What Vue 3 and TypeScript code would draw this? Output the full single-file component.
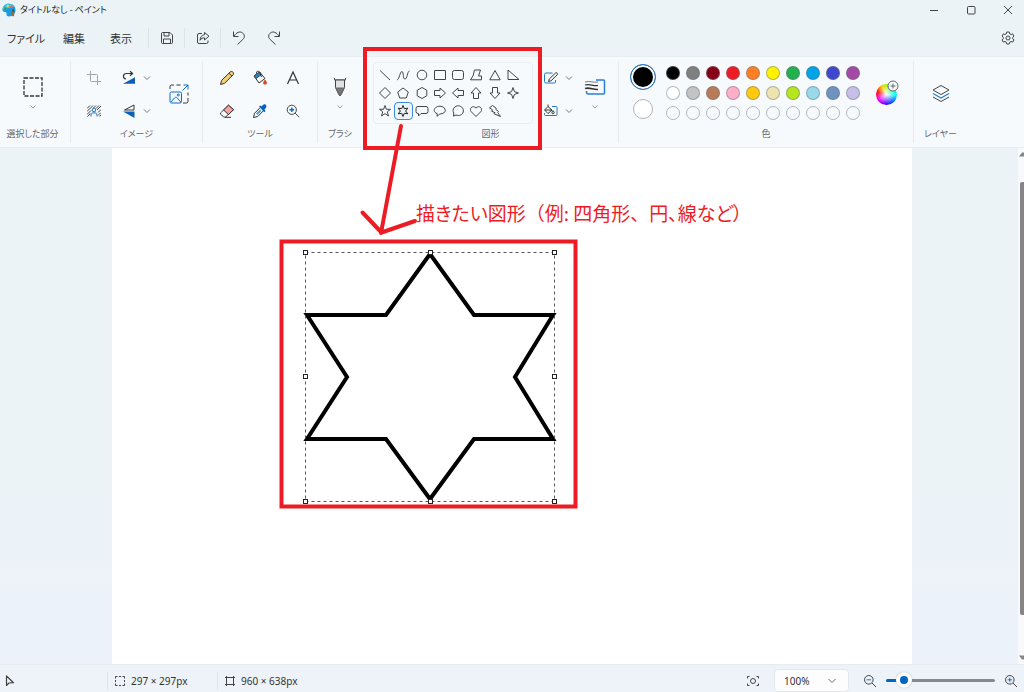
<script setup lang="ts">
import { ref } from 'vue'

interface Shape {
  name: string
  d: string
}

const shapes: Shape[] = [
  { name: '直線', d: 'M2 2.5 12 12' },
  { name: '曲線', d: 'M1 11.500C3 13 4 3 6 3.500s.500 7.500 3 7.500S11 3.500 13.500 3' },
  { name: '楕円', d: 'M7 2.200a4.800 4.800 0 1 0 0 9.600a4.800 4.800 0 1 0 0-9.600z' },
  { name: '四角形', d: 'M1.500 2.500h11v9h-11z' },
  { name: '角丸四角形', d: 'M3.500 2.500h7a2 2 0 0 1 2 2v5a2 2 0 0 1-2 2h-7a2 2 0 0 1-2-2v-5a2 2 0 0 1 2-2z' },
  { name: '多角形', d: 'M5.500 2H11.500L9.500 8H12.500V11.800H1.500L4 8z' },
  { name: '三角形', d: 'M7 2.500 12.200 11.800H1.800z' },
  { name: '直角三角形', d: 'M2 2v9.500h11z' },
  { name: 'ひし形', d: 'M7 1.500 12.500 7 7 12.500 1.500 7z' },
  { name: '五角形', d: 'M7 2 12.300 6 10.300 12H3.700L1.700 6z' },
  { name: '六角形', d: 'M7 1.500 11.800 4.200v5.600L7 12.500 2.200 9.800V4.200z' },
  { name: '右矢印', d: 'M1.500 4.500H7V2l5.500 5L7 12V9.500H1.500z' },
  { name: '左矢印', d: 'M12.500 4.500H7V2L1.500 7 7 12V9.500h5.500z' },
  { name: '上矢印', d: 'M4.500 12.500V7H2l5-5.500L12 7H9.500v5.500z' },
  { name: '下矢印', d: 'M4.500 1.500V7H2l5 5.500L12 7H9.500V1.500z' },
  { name: '4つ星', d: 'M7 1.500 8.400 5.600 12.500 7 8.400 8.400 7 12.500 5.600 8.400 1.500 7 5.600 5.600z' },
  { name: '5つ星', d: 'M7 1.500 8.400 5.300H12.500L9.300 7.900 10.500 12 7 9.600 3.500 12 4.700 7.900 1.500 5.300H5.600z' },
  { name: '6つ星', d: 'M7 1.500 8.300 4.700 11.800 4.200 9.600 7 11.800 9.800 8.300 9.300 7 12.500 5.700 9.300 2.200 9.800 4.400 7 2.200 4.200 5.700 4.700z' },
  { name: '角丸吹き出し', d: 'M3 2.500h8a2 2 0 0 1 2 2v3a2 2 0 0 1-2 2H6L3.500 12V9.500H3a2 2 0 0 1-2-2v-3a2 2 0 0 1 2-2z' },
  { name: '円形吹き出し', d: 'M4 12.300 4.300 9.700C-1 8 1 2.200 7 2.200s8 7.600-.2 7.800z' },
  { name: '雲形吹き出し', d: 'M2.500 12.200 2.800 9C.5 5.500 4 1.500 7.500 1.800S13 5 12.200 8 8 12.300 5 11z' },
  { name: 'ハート', d: 'M7 12.500 2.200 7.700C-.2 4.800 3.500 .5 7 4 10.500.5 14.200 4.800 11.800 7.700z' },
  { name: '稲妻', d: 'M4.500 1.500 8.300 4.300 7.600 5.200 10.500 7.500 9.700 8.500 12.500 12.500 6 9.700 7 8.700 3.500 7.200 4.600 6 1.500 3.800z' },
]

const selectedShape = ref('6つ星')

const palette: string[][] = [
  ['#000000', '#7f7f7f', '#880015', '#ed1c24', '#ff7f27', '#fff200', '#22b14c', '#00a2e8', '#3f48cc', '#a349a4'],
  ['#ffffff', '#c3c3c3', '#b97a57', '#ffaec9', '#ffc90e', '#efe4b0', '#b5e61d', '#99d9ea', '#7092be', '#c8bfe7'],
  Array.from({ length: 10 }, () => 'transparent'),
]

const handles: [number, number][] = [
  [3, 3], [128, 3], [252, 3],
  [3, 127], [252, 127],
  [3, 252], [128, 252], [252, 252],
]

const zoom = ref('100%')
const zoomPos = ref(11)
</script>

<template>
  <div class="app">
    <header class="titlebar">
      <svg class="logo" width="14" height="14" viewBox="0 0 14 14">
        <path d="M7 .8C3 .8.5 3.500.5 7c0 1.500 1.500 2 2.800 2 1.200 0 1.400 1 1.200 2-.3 1.500.8 2.400 2.500 2.400 4 0 6.500-3 6.500-6.400S11 .8 7 .8z" fill="#1a9be0" />
        <path d="M7 .8C3 .8.5 3.500.5 7l6-2 6-1.500C11.300 1.800 9.400.8 7 .8z" fill="#3cc0f2" />
        <circle cx="3.300" cy="5.500" r="1.300" fill="#2fa35a" />
        <circle cx="5.800" cy="3" r="1.200" fill="#f7d34a" />
        <circle cx="9.400" cy="3.600" r="1.200" fill="#f0703a" />
        <path d="M10 8.500h2.300l-.3 4.800h-1.700z" fill="#a65f2b" />
        <path d="M9.800 8.500 11 5.500l1.600 3z" fill="#4a4a52" />
      </svg>
      <h1>タイトルなし - ペイント</h1>
      <div class="window-buttons">
        <button type="button" aria-label="最小化"><svg width="12" height="12" viewBox="0 0 12 12"><path d="M2 6.500h8" /></svg></button>
        <button type="button" aria-label="最大化"><svg width="12" height="12" viewBox="0 0 12 12"><rect x="2.500" y="2.500" width="7.500" height="7.500" rx="1" /></svg></button>
        <button type="button" aria-label="閉じる"><svg width="12" height="12" viewBox="0 0 12 12"><path d="M2 2l8 8M10 2l-8 8" /></svg></button>
      </div>
    </header>

    <div class="menubar">
      <nav class="menus">
        <button type="button">ファイル</button>
        <button type="button">編集</button>
        <button type="button">表示</button>
      </nav>
      <button type="button" class="quick ruled" aria-label="保存">
        <svg width="14" height="14" viewBox="0 0 14 14"><path d="M1.500 2.500a1 1 0 0 1 1-1h7.500l2.500 2.500v7.500a1 1 0 0 1-1 1h-9a1 1 0 0 1-1-1zM4 1.500V5h5V1.500M3.500 12.500V8h7v4.500" /></svg>
      </button>
      <button type="button" class="quick ruled" aria-label="共有">
        <svg width="14" height="14" viewBox="0 0 14 14"><path d="M6 2.500H3a1.500 1.500 0 0 0-1.500 1.500v7A1.500 1.500 0 0 0 3 12.500h7.500A1.500 1.500 0 0 0 12 11V9.500M8.500 1.500 13 5.200 8.500 9V6.800C6.500 6.800 5.300 7.500 4 9.300 4.300 5.800 6 4 8.500 3.700z" /></svg>
      </button>
      <button type="button" class="quick ruled" aria-label="元に戻す">
        <svg width="14" height="16" viewBox="0 0 14 16"><path d="M1.500 1.500v5h5M2 6C4.500 2.500 7.500 1 10.300 2.700c2.700 1.800 2.500 4.800.7 6.600L5.500 14.500" /></svg>
      </button>
      <button type="button" class="quick" aria-label="やり直し">
        <svg width="14" height="16" viewBox="0 0 14 16"><path d="M12.500 1.500v5h-5M12 6C9.500 2.500 6.500 1 3.700 2.700 1 4.500 1.200 7.500 3 9.300l5.500 5.200" /></svg>
      </button>
      <button type="button" class="settings" aria-label="設定">
        <svg width="14" height="14" viewBox="0 0 14 14"><path d="M5.700 1h2.600l.4 1.800 1.300.7 1.700-.6 1.300 2.200L11.700 6.300v1.400L13 8.900l-1.300 2.200-1.700-.6-1.300.7L8.300 13H5.700l-.4-1.800-1.300-.7-1.700.6L1 8.900l1.300-1.200V6.300L1 5.100l1.300-2.200 1.700.6 1.300-.7z" stroke-linejoin="round" /><circle cx="7" cy="7" r="2" /></svg>
      </button>
    </div>

    <div class="ribbon">
      <section class="group select-group">
        <div class="stack">
          <button type="button" class="large" aria-label="選択">
            <svg width="20" height="20" viewBox="0 0 20 20"><rect x="1" y="1" width="18" height="18" stroke="#333" stroke-dasharray="4 1.500" stroke-width="1.300" /></svg>
          </button>
          <button type="button" class="drop" aria-label="選択の種類"><svg width="8" height="6" viewBox="0 0 8 6"><path d="M1.500 1.500 4 4l2.500-2.500" /></svg></button>
        </div>
        <h2>選択した部分</h2>
      </section>

      <section class="group">
        <div class="image-tools">
          <button type="button" aria-label="トリミング">
            <svg width="14" height="14" viewBox="0 0 14 14"><path d="M0 3.500h9.500a1 1 0 0 1 1 1V14M3.500 0v9.500a1 1 0 0 0 1 1H14" stroke="#a3a7ab" /></svg>
          </button>
          <div class="split">
            <button type="button" aria-label="回転">
              <svg width="14" height="14" viewBox="0 0 14 14"><path d="M13 6.300v6.500H1z" fill="#0a5fb8" stroke="none" /><path d="M4 8C.5 7.500.6 2.500 4.500 2.500h6M8 .2 10.600 2.500 8 4.800" stroke="#333" stroke-width="1.200" /></svg>
            </button>
            <button type="button" class="drop" aria-label="回転の種類"><svg width="8" height="6" viewBox="0 0 8 6"><path d="M1 1.500 4 4.500l3-3" /></svg></button>
          </div>
          <button type="button" class="resize" aria-label="サイズ変更">
            <svg width="22" height="22" viewBox="0 0 22 22"><path d="M2 6V3.500A1.500 1.500 0 0 1 3.500 2H6M8.500 2h4M20 9.500v3M20 15v3.500a1.500 1.500 0 0 1-1.500 1.500H15" stroke="#333" /><rect x="2" y="9" width="11.500" height="11" rx="1.500" stroke="#0a6cc7" /><path d="M3 19l3.500-4c1-1 1.800-1 2.800 0l3.500 4M14.500 7.500 20 2M15.500 2H20v4.500" stroke="#0a6cc7" /><circle cx="10.300" cy="12" r="1" stroke="#0a6cc7" /></svg>
          </button>
          <button type="button" aria-label="背景の削除">
            <svg width="14" height="12" viewBox="0 0 14 12"><path d="M0 3.500 3 .5M0 6.500l6-6M0 9.500l4-4M.5 11.500l3-3M6.500 3 9 .5M9 3.500l3-3M10 5l4-4M11 7.500l3-3M11 10.500l3-3M12.500 11.500l1.500-1.500" stroke="#3a3a3a" /><circle cx="7" cy="5" r="1.800" stroke="#1873cc" /><path d="M4 11.500V10c0-1.500 1-2.200 3-2.200s3 .7 3 2.200v1.500" stroke="#1873cc" /></svg>
          </button>
          <div class="split">
            <button type="button" aria-label="反転">
              <svg width="14" height="14" viewBox="0 0 14 14"><path d="M12 1v5H2.500z" stroke="#333" /><path d="M12.500 7.500V14L1 7.500z" fill="#0a5fb8" stroke="none" /></svg>
            </button>
            <button type="button" class="drop" aria-label="反転の種類"><svg width="8" height="6" viewBox="0 0 8 6"><path d="M1 1.500 4 4.500l3-3" /></svg></button>
          </div>
        </div>
        <h2>イメージ</h2>
      </section>

      <section class="group">
        <div class="tools">
          <button type="button" aria-label="鉛筆">
            <svg width="16" height="16" viewBox="0 0 16 16"><path d="M1.500 14.500 2.600 10.500 11.300 1.800c1.800-1.300 4.200 1 2.900 2.900L5.500 13.400z" fill="#f3cf72" stroke="#333" /><path d="M10 3.200 12.800 6" stroke="#333" /></svg>
          </button>
          <button type="button" aria-label="塗りつぶし">
            <svg width="16" height="16" viewBox="0 0 16 16"><path d="M2 6 7.500 2 13 8.500 7 13z" fill="#f4f7fa" stroke="#333" /><path d="M2 6 7.500 2 9.500 4.500 4 8.500z" fill="#1b86d8" /><path d="M4.500 3.500C4 .5 7 .5 8 3l1.500 4" stroke="#333" /><path d="M13 9.500c3 3.500 2 5 0 5s-3-1.500 0-5z" fill="#d9481c" stroke="none" /></svg>
          </button>
          <button type="button" aria-label="テキスト">
            <svg width="16" height="16" viewBox="0 0 16 16"><path d="M2.500 14 8 2l5.500 12M4.300 10h7.400" stroke="#333" stroke-width="1.200" /></svg>
          </button>
          <button type="button" aria-label="消しゴム">
            <svg width="16" height="16" viewBox="0 0 16 16"><path d="M1.500 10 9.500 2.200l5 4.500L6.500 14H4.800L1.500 11.200z" fill="#fff" stroke="#333" /><path d="M4.500 7 9.500 2.200l5 4.500-5 4.800z" fill="#f4a3a3" stroke="#333" /><path d="M6 14.300h6" stroke="#333" /></svg>
          </button>
          <button type="button" aria-label="色の選択">
            <svg width="16" height="16" viewBox="0 0 16 16"><path d="M8 4.800 2.500 10.300 1.500 14.500l4.200-1L11.200 8" stroke="#333" /><path d="M7 3.500 8.200 2.500 9.500 3.500 11 2c2-2 4.500.7 3 2.700L12.500 6.500l1 1.500-1.200 1.200z" fill="#0a5fb8" stroke="none" /><path d="M4 10.500 8 6.500l1.500 1.500-4 4z" fill="#4ba0e0" stroke="none" /></svg>
          </button>
          <button type="button" aria-label="拡大鏡">
            <svg width="16" height="16" viewBox="0 0 16 16"><circle cx="6.800" cy="6.800" r="4.600" stroke="#444" /><path d="M10.200 10.200l4 4" stroke="#444" /><path d="M4.500 6.800h4.600M6.800 4.500v4.600" stroke="#0a6cc7" stroke-width="1.400" /></svg>
          </button>
        </div>
        <h2>ツール</h2>
      </section>

      <section class="group plain">
        <div class="stack">
          <button type="button" class="large" aria-label="ブラシ">
            <svg width="14" height="20" viewBox="0 0 14 20"><path d="M1.500 1v2h11V1" stroke="#444" /><path d="M2.500 3v7.500L5.500 17 7 19l1.500-2 3-6.500V3z" stroke="#444" fill="#dfe2e5" /><path d="M3 11h8L8 16.700l-1 1.800-1-1.800z" fill="#777" stroke="#666" /></svg>
          </button>
          <button type="button" class="drop" aria-label="ブラシの種類"><svg width="8" height="6" viewBox="0 0 8 6"><path d="M1.500 1.500 4 4l2.500-2.500" /></svg></button>
        </div>
        <h2>ブラシ</h2>
      </section>

      <section class="group">
        <div class="shape-tools">
          <div class="gallery">
            <button
              v-for="shape in shapes"
              :key="shape.name"
              type="button"
              :class="{ selected: shape.name === selectedShape }"
              :aria-label="shape.name"
              @click="selectedShape = shape.name"
            >
              <svg width="14" height="14" viewBox="0 0 14 14"><path :d="shape.d" /></svg>
            </button>
          </div>
          <div class="rows">
            <div class="split">
              <button type="button" aria-label="図形の輪郭">
                <svg width="16" height="14" viewBox="0 0 16 14"><path d="M9.500 2H3a1.500 1.500 0 0 0-1.500 1.500v7A1.500 1.500 0 0 0 3 12h8.500a1 1 0 0 0 1-1V9" stroke="#2279cc" /><path d="M5.500 10.500 6.300 8 12.500 2c1.200-.8 2.500.5 1.800 1.700L8 9.800z" fill="#f7fafd" stroke="#333" /></svg>
              </button>
              <button type="button" class="drop" aria-label="輪郭の種類"><svg width="8" height="6" viewBox="0 0 8 6"><path d="M1 1.500 4 4.500l3-3" /></svg></button>
            </div>
            <div class="split">
              <button type="button" aria-label="図形の塗りつぶし">
                <svg width="16" height="14" viewBox="0 0 16 14"><path d="M9 2.500h4a1 1 0 0 1 1 1v7a1 1 0 0 1-1 1H2.500a1 1 0 0 1-1-1V9" stroke="#2279cc" /><path d="M5 2.500 1.500 6 5 9.500 9 6zM5 2.500V.5M2 6h6.500" fill="#f7fafd" stroke="#333" /><path d="M10 6.500c1.700 2 1.300 3.300 0 3.300s-1.700-1.300 0-3.300z" stroke="#333" /></svg>
              </button>
              <button type="button" class="drop" aria-label="塗りつぶしの種類"><svg width="8" height="6" viewBox="0 0 8 6"><path d="M1 1.500 4 4.500l3-3" /></svg></button>
            </div>
          </div>
          <div class="stack">
            <button type="button" class="large" aria-label="線の太さ">
              <svg width="22" height="18" viewBox="0 0 22 18"><path d="M12 2h7.500a1 1 0 0 1 1 1v12a1 1 0 0 1-1 1H4.500a2 2 0 0 1-2-2v-1" stroke="#2a80d0" stroke-width="1.500" /><path d="M1 4c5-1.500 8 1 13 0" stroke="#555" stroke-width=".8" /><path d="M1 7c5-1.500 8 1.500 13 .5" stroke="#333" stroke-width="1.200" /><path d="M1 10.500c5-1.500 8 1.500 13 1" stroke="#333" stroke-width="1.600" /></svg>
            </button>
            <button type="button" class="drop" aria-label="太さの選択"><svg width="8" height="6" viewBox="0 0 8 6"><path d="M1.500 1.500 4 4l2.500-2.500" /></svg></button>
          </div>
        </div>
        <h2>図形</h2>
      </section>

      <section class="group">
        <div class="colours">
          <div class="current">
            <button type="button" class="primary" aria-label="色 1"></button>
            <button type="button" class="secondary" aria-label="色 2"></button>
          </div>
          <div class="palette">
            <template v-for="(row, r) in palette" :key="r">
              <button
                v-for="(colour, c) in row"
                :key="c"
                type="button"
                :aria-label="`パレット ${r + 1}-${c + 1}`"
                :style="{ backgroundColor: colour }"
              ></button>
            </template>
          </div>
          <button type="button" class="wheel" aria-label="色の編集">
            <span class="disc"></span>
            <svg width="12" height="12" viewBox="0 0 12 12"><circle cx="6" cy="6" r="5" fill="#f7fafd" stroke="#666" /><path d="M3.500 6h5M6 3.500v5" stroke="#666" /></svg>
          </button>
        </div>
        <h2>色</h2>
      </section>

      <section class="group plain">
        <div class="layers">
          <button type="button" aria-label="レイヤー">
            <svg width="18" height="20" viewBox="0 0 18 20"><path d="M9 1.500 17 6 9 10.500 1 6z" stroke="#444" stroke-linejoin="round" /><path d="M1 9.500 9 14l8-4.500" stroke="#2a80d0" stroke-width="1.300" /><path d="M1 13 9 17.500 17 13" stroke="#444" /></svg>
          </button>
        </div>
        <h2>レイヤー</h2>
      </section>
    </div>

    <main class="workspace">
      <div class="paper">
        <svg class="drawing" width="256" height="256" viewBox="0 0 256 256">
          <path d="M128 5 172 66H251L213 128 251 190H172L128 250 84 190H5L45 128 5 66H84z" fill="none" stroke="#000" stroke-width="4" />
          <rect x="3.500" y="3.500" width="249" height="249" fill="none" stroke="#555" stroke-dasharray="3 3" />
          <rect v-for="([x, y], i) in handles" :key="i" :x="x - 1.500" :y="y - 1.500" width="4" height="4" fill="#fff" stroke="#222" />
        </svg>
      </div>
      <div class="scrollbar">
        <svg width="6" height="6" viewBox="0 0 6 6"><path d="M1 5.500 4 1.500h2v4z" /></svg>
        <span class="thumb"></span>
        <svg width="6" height="6" viewBox="0 0 6 6"><path d="M1 .5 4 4.500h2v-4z" /></svg>
      </div>
    </main>

    <footer class="statusbar">
      <div class="cell pointer">
        <svg width="10" height="12" viewBox="0 0 10 12"><path d="M1.500 1v9.500L4 8l4.500-.3z" stroke-linejoin="round" stroke-width="1.200" /></svg>
      </div>
      <div class="cell ruled">
        <svg width="12" height="12" viewBox="0 0 12 12"><path d="M1.500 3.500v-2h2M5 1.500h2M8.500 1.500h2v2M10.500 5v2M10.500 8.500v2h-2M7 10.500H5M3.500 10.500h-2v-2M1.500 7V5" /></svg>
        <span>297 × 297px</span>
      </div>
      <div class="cell ruled">
        <svg width="12" height="12" viewBox="0 0 12 12"><path d="M2.500 1v10M9.500 1v10M1 2.500h10M1 9.500h10" /></svg>
        <span>960 × 638px</span>
      </div>
      <div class="zoom">
        <button type="button" class="fit" aria-label="ウィンドウに合わせる">
          <svg width="14" height="12" viewBox="0 0 14 12"><path d="M1.500 3.500v-2h2M10.500 1.500h2v2M12.500 8.500v2h-2M3.500 10.500h-2v-2" /><circle cx="7" cy="6" r="2.500" /></svg>
        </button>
        <div class="level">
          <select v-model="zoom" aria-label="ズーム倍率">
            <option>50%</option>
            <option>100%</option>
            <option>200%</option>
          </select>
          <svg width="10" height="6" viewBox="0 0 10 6"><path d="M1.500 1 5 4.500 8.500 1" /></svg>
        </div>
        <button type="button" class="step" aria-label="縮小">
          <svg width="14" height="14" viewBox="0 0 14 14"><circle cx="5.800" cy="5.800" r="4.300" /><path d="M9 9l4 4" /><path d="M3.500 5.800h4.600" stroke="#1873cc" /></svg>
        </button>
        <input v-model="zoomPos" type="range" min="0" max="100" aria-label="ズーム" />
        <button type="button" class="step" aria-label="拡大">
          <svg width="14" height="14" viewBox="0 0 14 14"><circle cx="5.800" cy="5.800" r="4.300" /><path d="M9 9l4 4" /><path d="M3.500 5.800h4.600M5.800 3.500v4.600" stroke="#1873cc" /></svg>
        </button>
      </div>
    </footer>

    <svg class="notes" width="760" height="520" viewBox="0 0 760 520">
      <rect x="365" y="49" width="175" height="99" stroke-width="4" />
      <rect x="281.500" y="241.500" width="294" height="265" stroke-width="4" />
      <path d="M401 126 381 233M362.500 212.500 381.500 232.500 415 221" stroke-width="4" stroke-linecap="round" stroke-linejoin="round" />
      <text x="416" y="221">描きたい図形<tspan class="wide">（</tspan>例: 四角形<tspan class="wide">、</tspan>円、線など）</text>
    </svg>
  </div>
</template>

<style>
body {
  margin: 0;
}
</style>

<style scoped>
.app {
  position: relative;
  display: grid;
  grid-template-rows: auto auto auto 1fr auto;
  height: 100vh;
  overflow: hidden;
  background: #ebf3f7;
  color: #333;
  font-family: "Noto Sans", "Noto Sans CJK JP", sans-serif;
  font-size: 10px;
}

button {
  display: flex;
  align-items: center;
  justify-content: center;
  padding: 0;
  border: 0;
  background: none;
  color: inherit;
  font: inherit;
}

svg {
  display: block;
  flex: none;
  fill: none;
  stroke: #444;
}

h1,
h2 {
  margin: 0;
  font-weight: 400;
}

.titlebar {
  display: flex;
  align-items: center;
  height: 19px;
  padding-left: 2px;
}

.logo {
  stroke: none;
}

h1 {
  margin-left: 4px;
  color: #222;
  font-family: "Noto Sans CJK JP", sans-serif;
  font-size: 9px;
  font-feature-settings: "palt";
}

.window-buttons {
  display: flex;
  gap: 5px;
  margin-left: auto;
}

.window-buttons button {
  width: 32px;
  height: 19px;
}

.menubar {
  display: flex;
  align-items: center;
  height: 38px;
  box-sizing: border-box;
  border-bottom: 1px solid #e9eef0;
}

.menus {
  display: grid;
  grid-template-columns: 56px 47px 38px;
  padding-left: 7px;
  font-family: "Noto Sans CJK JP", sans-serif;
  font-size: 11px;
  font-feature-settings: "palt";
}

.menus button {
  justify-content: start;
}

.quick {
  width: 36px;
  height: 20px;
}

.ruled {
  border-left: 1px solid #dde4e8;
}

.settings {
  width: 32px;
  height: 20px;
  margin-left: auto;
}

.ribbon {
  display: grid;
  grid-template-columns: 71px 132px 115px 45px 256px 295px 54px;
  padding-top: 4px;
  border-bottom: 1px solid #e9edef;
  background: #f7fafd;
}

.group {
  display: grid;
  grid-template-rows: 66px 14px;
  padding-bottom: 2px;
  margin-bottom: 4px;
  border-right: 1px solid #e6eaed;
}

.select-group {
  padding-right: 5px;
}

.plain {
  border-right-color: transparent;
}

h2 {
  color: #666;
  font-family: "Noto Sans CJK JP", sans-serif;
  font-size: 9px;
  line-height: 14px;
  text-align: center;
  white-space: nowrap;
  font-feature-settings: "palt";
}

.drop svg {
  stroke: #777;
}

.stack {
  display: flex;
  flex-direction: column;
  align-items: center;
  gap: 4px;
  padding-top: 14px;
}

.large {
  width: 28px;
  height: 24px;
}

.stack .drop {
  width: 28px;
  height: 8px;
}

.stack .drop svg {
  stroke: #999;
}

.split {
  display: grid;
  grid-template-columns: 16px 20px;
}

.image-tools {
  display: grid;
  grid-template-columns: 46px 36px 1fr;
  grid-template-rows: 33px 33px;
  column-gap: 4px;
  padding-right: 5px;
}

.resize {
  grid-row: 1 / 3;
  grid-column: 3;
}

.tools {
  display: grid;
  grid-template-columns: repeat(3, 33px);
  grid-template-rows: 33px 33px;
  justify-content: center;
}

.shape-tools {
  display: flex;
  align-items: start;
  padding-left: 10px;
}

.gallery {
  display: grid;
  grid-template-columns: repeat(8, 1fr);
  grid-template-rows: repeat(3, 18px);
  width: 160px;
  height: 62px;
  margin: 1px 10px 0 0;
  padding: 3px 10px 3px 2px;
  box-sizing: border-box;
  border: 1px solid #eceff2;
  border-radius: 4px;
}

.gallery .selected {
  border: 1px solid #3d8bd4;
  border-radius: 4px;
  background: #eef3f8;
}

.gallery .selected svg {
  stroke: #222;
}

.rows {
  display: grid;
  grid-template-rows: 33px 33px;
}

.shape-tools .stack {
  margin-left: 2px;
}

.colours {
  display: flex;
  align-items: start;
  padding-left: 11px;
}

.current {
  display: grid;
  justify-items: center;
  gap: 9px;
  margin: 3px 7px 0 0;
}

.primary {
  width: 26px;
  height: 26px;
  border: 1px solid #2a80d0;
  border-radius: 50%;
  background: #000;
  box-shadow: inset 0 0 0 2px #f7fafd;
}

.secondary {
  width: 20px;
  height: 20px;
  border: 1px solid #b0b3b6;
  border-radius: 50%;
  background: #fff;
}

.palette {
  display: grid;
  grid-template-columns: repeat(10, 20px);
  grid-template-rows: repeat(3, 20px);
  place-items: center;
  padding-top: 2px;
}

.palette button {
  width: 14px;
  height: 14px;
  border: 1px solid rgba(110, 120, 130, 0.5);
  border-radius: 50%;
}

.wheel {
  position: relative;
  width: 26px;
  height: 66px;
  margin-left: 10px;
}

.disc {
  width: 21px;
  height: 21px;
  border-radius: 50%;
  background:
    radial-gradient(circle, #fff 0, rgba(255, 255, 255, 0) 65%),
    conic-gradient(#9f0, #0f6 45deg, #0ff 90deg, #06f 135deg, #40f 180deg, #f0f 240deg, #f00 285deg, #fc0 330deg, #9f0);
}

.wheel svg {
  position: absolute;
  top: 19px;
  right: 0;
}

.layers {
  display: grid;
}

.workspace {
  position: relative;
  display: flex;
  justify-content: center;
  min-height: 0;
  background: linear-gradient(#ebf3f7 65%, #edf2fa);
}

.paper {
  position: relative;
  width: 800px;
  background: #fff;
}

.drawing {
  position: absolute;
  top: 101px;
  left: 190px;
}

.scrollbar {
  position: absolute;
  top: 0;
  right: 0;
  bottom: 0;
  display: flex;
  flex-direction: column;
  align-items: end;
  box-sizing: border-box;
  width: 6px;
  padding: 3px 0;
  background: #f7f9fc;
}

.scrollbar svg {
  fill: #858585;
  stroke: none;
}

.thumb {
  flex: 1;
  width: 4px;
  margin: 25px 0 40px;
  border-radius: 2px 0 0 2px;
  background: #858585;
}

.statusbar {
  display: flex;
  align-items: center;
  height: 28px;
  padding-top: 4px;
  box-sizing: border-box;
  border-top: 1px solid #e6ebef;
  background: #eef3f9;
}

.cell {
  display: flex;
  align-items: center;
  gap: 5px;
  width: 103px;
  height: 18px;
  padding-left: 6px;
  white-space: nowrap;
}

.pointer {
  width: 102px;
  padding-left: 5px;
}

.zoom {
  display: flex;
  align-items: center;
  margin-left: auto;
}

.fit {
  width: 20px;
  height: 20px;
  margin-right: 11px;
}

.level {
  position: relative;
  width: 75px;
}

.level select {
  width: 100%;
  height: 23px;
  padding: 0 20px 0 9px;
  appearance: none;
  border: 1px solid #e4e8ec;
  border-radius: 4px;
  background: #fdfdfe;
  color: #333;
  font: inherit;
}

.level svg {
  position: absolute;
  top: 9px;
  right: 12px;
  stroke: #666;
}

.step {
  width: 26px;
  height: 20px;
}

.level + .step {
  margin-left: 8px;
}

input[type="range"] {
  width: 109px;
  height: 16px;
  margin: 0 3px;
  appearance: none;
  background: none;
}

input[type="range"]::-webkit-slider-runnable-track {
  height: 3px;
  border-radius: 2px;
  background: linear-gradient(90deg, #0067c0 16%, #868a8e 16%);
}

input[type="range"]::-webkit-slider-thumb {
  width: 16px;
  height: 16px;
  margin-top: -7px;
  appearance: none;
  border: 4px solid #fff;
  border-radius: 50%;
  background: #0067c0;
  box-shadow: 0 0 1px #999;
}

.notes {
  position: absolute;
  top: 0;
  left: 0;
  stroke: #ed1c24;
  pointer-events: none;
}

.notes text {
  fill: #ed1c24;
  stroke: none;
  font-family: "Noto Sans CJK JP", sans-serif;
  font-size: 19px;
  font-feature-settings: "palt";
}

.notes .wide {
  font-feature-settings: normal;
}
</style>
